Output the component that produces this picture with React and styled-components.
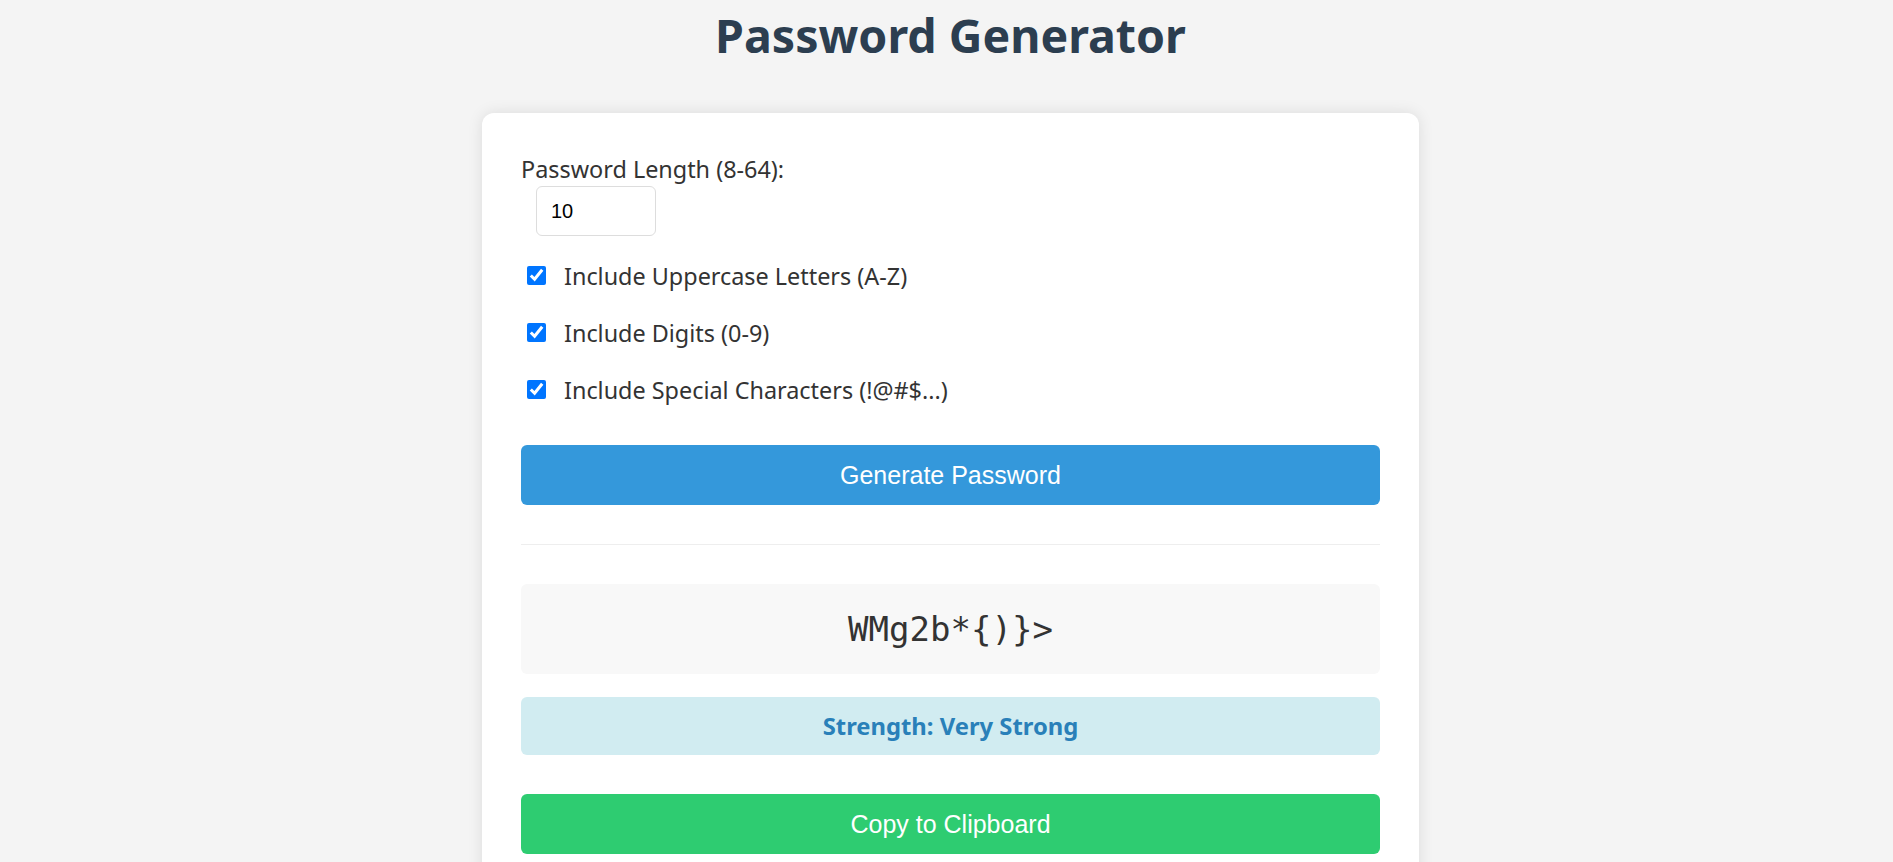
import { useState } from 'react';
import styled, { createGlobalStyle } from 'styled-components';

const GlobalStyle = createGlobalStyle`
  body {
    margin: 0;
    background: #f4f4f4;
    font-family: "Noto Sans", "Open Sans", sans-serif;
    color: #333;
  }
`;

const Page = styled.div`
  padding: 0 0 40px 8px;
`;

const Title = styled.h1`
  margin: 7px 0 50px;
  text-align: center;
  color: #2c3e50;
  font-size: 46.5px;
  line-height: 56px;
  font-weight: 700;
`;

const Card = styled.div`
  width: 937px;
  box-sizing: border-box;
  margin: 0 auto;
  padding: 40px 39px;
  background: #ffffff;
  border-radius: 12px;
  box-shadow: 0 0 15px rgba(0, 0, 0, 0.1);
  display: flex;
  flex-direction: column;
`;

const Label = styled.label`
  display: block;
  font-size: 23.4px;
  line-height: 32px;
  color: #333;
`;

const LengthInput = styled.input`
  width: 120px;
  height: 50px;
  box-sizing: border-box;
  margin: 1px 0 0 15px;
  padding: 0 14px;
  border: 1px solid #ddd;
  border-radius: 6px;
  font-family: "Liberation Sans", Arial, sans-serif;
  font-size: 20px;
  color: #000;
  outline: none;
`;

const OptionRow = styled.label`
  display: flex;
  align-items: center;
  height: 36px;
  margin-top: 21px;
  font-size: 23.4px;
  color: #333;
  line-height: 1;
  padding-top: 4px;
  box-sizing: border-box;
`;

const Check = styled.input`
  width: 19px;
  height: 19px;
  margin: -4px 18px 0 6px;
  accent-color: #0075ff;
`;

const ActionButton = styled.button`
  height: 60px;
  margin-top: ${(p) => p.$gap}px;
  border: none;
  border-radius: 6px;
  background: ${(p) => p.$color};
  color: #fff;
  font-family: "Liberation Sans", Arial, sans-serif;
  font-size: 25px;
  cursor: pointer;
`;

const Divider = styled.hr`
  margin: 39px 0 0;
  border: none;
  border-top: 1px solid #eee;
`;

const PasswordBox = styled.div`
  height: 90px;
  margin-top: 39px;
  display: flex;
  align-items: center;
  justify-content: center;
  background: #f8f8f8;
  border-radius: 6px;
  font-family: "DejaVu Sans Mono", monospace;
  font-size: 34px;
  color: #333;
`;

const Strength = styled.div`
  height: 58px;
  margin-top: 23px;
  display: flex;
  align-items: center;
  justify-content: center;
  background: #d1ecf1;
  border-radius: 6px;
  color: #2980b9;
  font-size: 23.8px;
  font-weight: 700;
`;

const options = [
  { id: 'upper', text: 'Include Uppercase Letters (A-Z)' },
  { id: 'digits', text: 'Include Digits (0-9)' },
  { id: 'special', text: 'Include Special Characters (!@#$...)' },
];

export default function App() {
  const [length, setLength] = useState(10);
  const [checked, setChecked] = useState({ upper: true, digits: true, special: true });

  return (
    <Page>
      <GlobalStyle />
      <Title>Password Generator</Title>
      <Card>
        <Label htmlFor="len">Password Length (8-64):</Label>
        <div>
          <LengthInput
            id="len"
            type="text"
            value={length}
            onChange={(e) => setLength(e.target.value)}
          />
        </div>
        {options.map((o) => (
          <OptionRow key={o.id}>
            <Check
              type="checkbox"
              checked={checked[o.id]}
              onChange={() => setChecked({ ...checked, [o.id]: !checked[o.id] })}
            />
            {o.text}
          </OptionRow>
        ))}
        <ActionButton $color="#3498db" $gap={38}>Generate Password</ActionButton>
        <Divider />
        <PasswordBox>WMg2b*{'{'}){'}'}&gt;</PasswordBox>
        <Strength>Strength: Very Strong</Strength>
        <ActionButton $color="#2ecc71" $gap={39}>Copy to Clipboard</ActionButton>
      </Card>
    </Page>
  );
}
